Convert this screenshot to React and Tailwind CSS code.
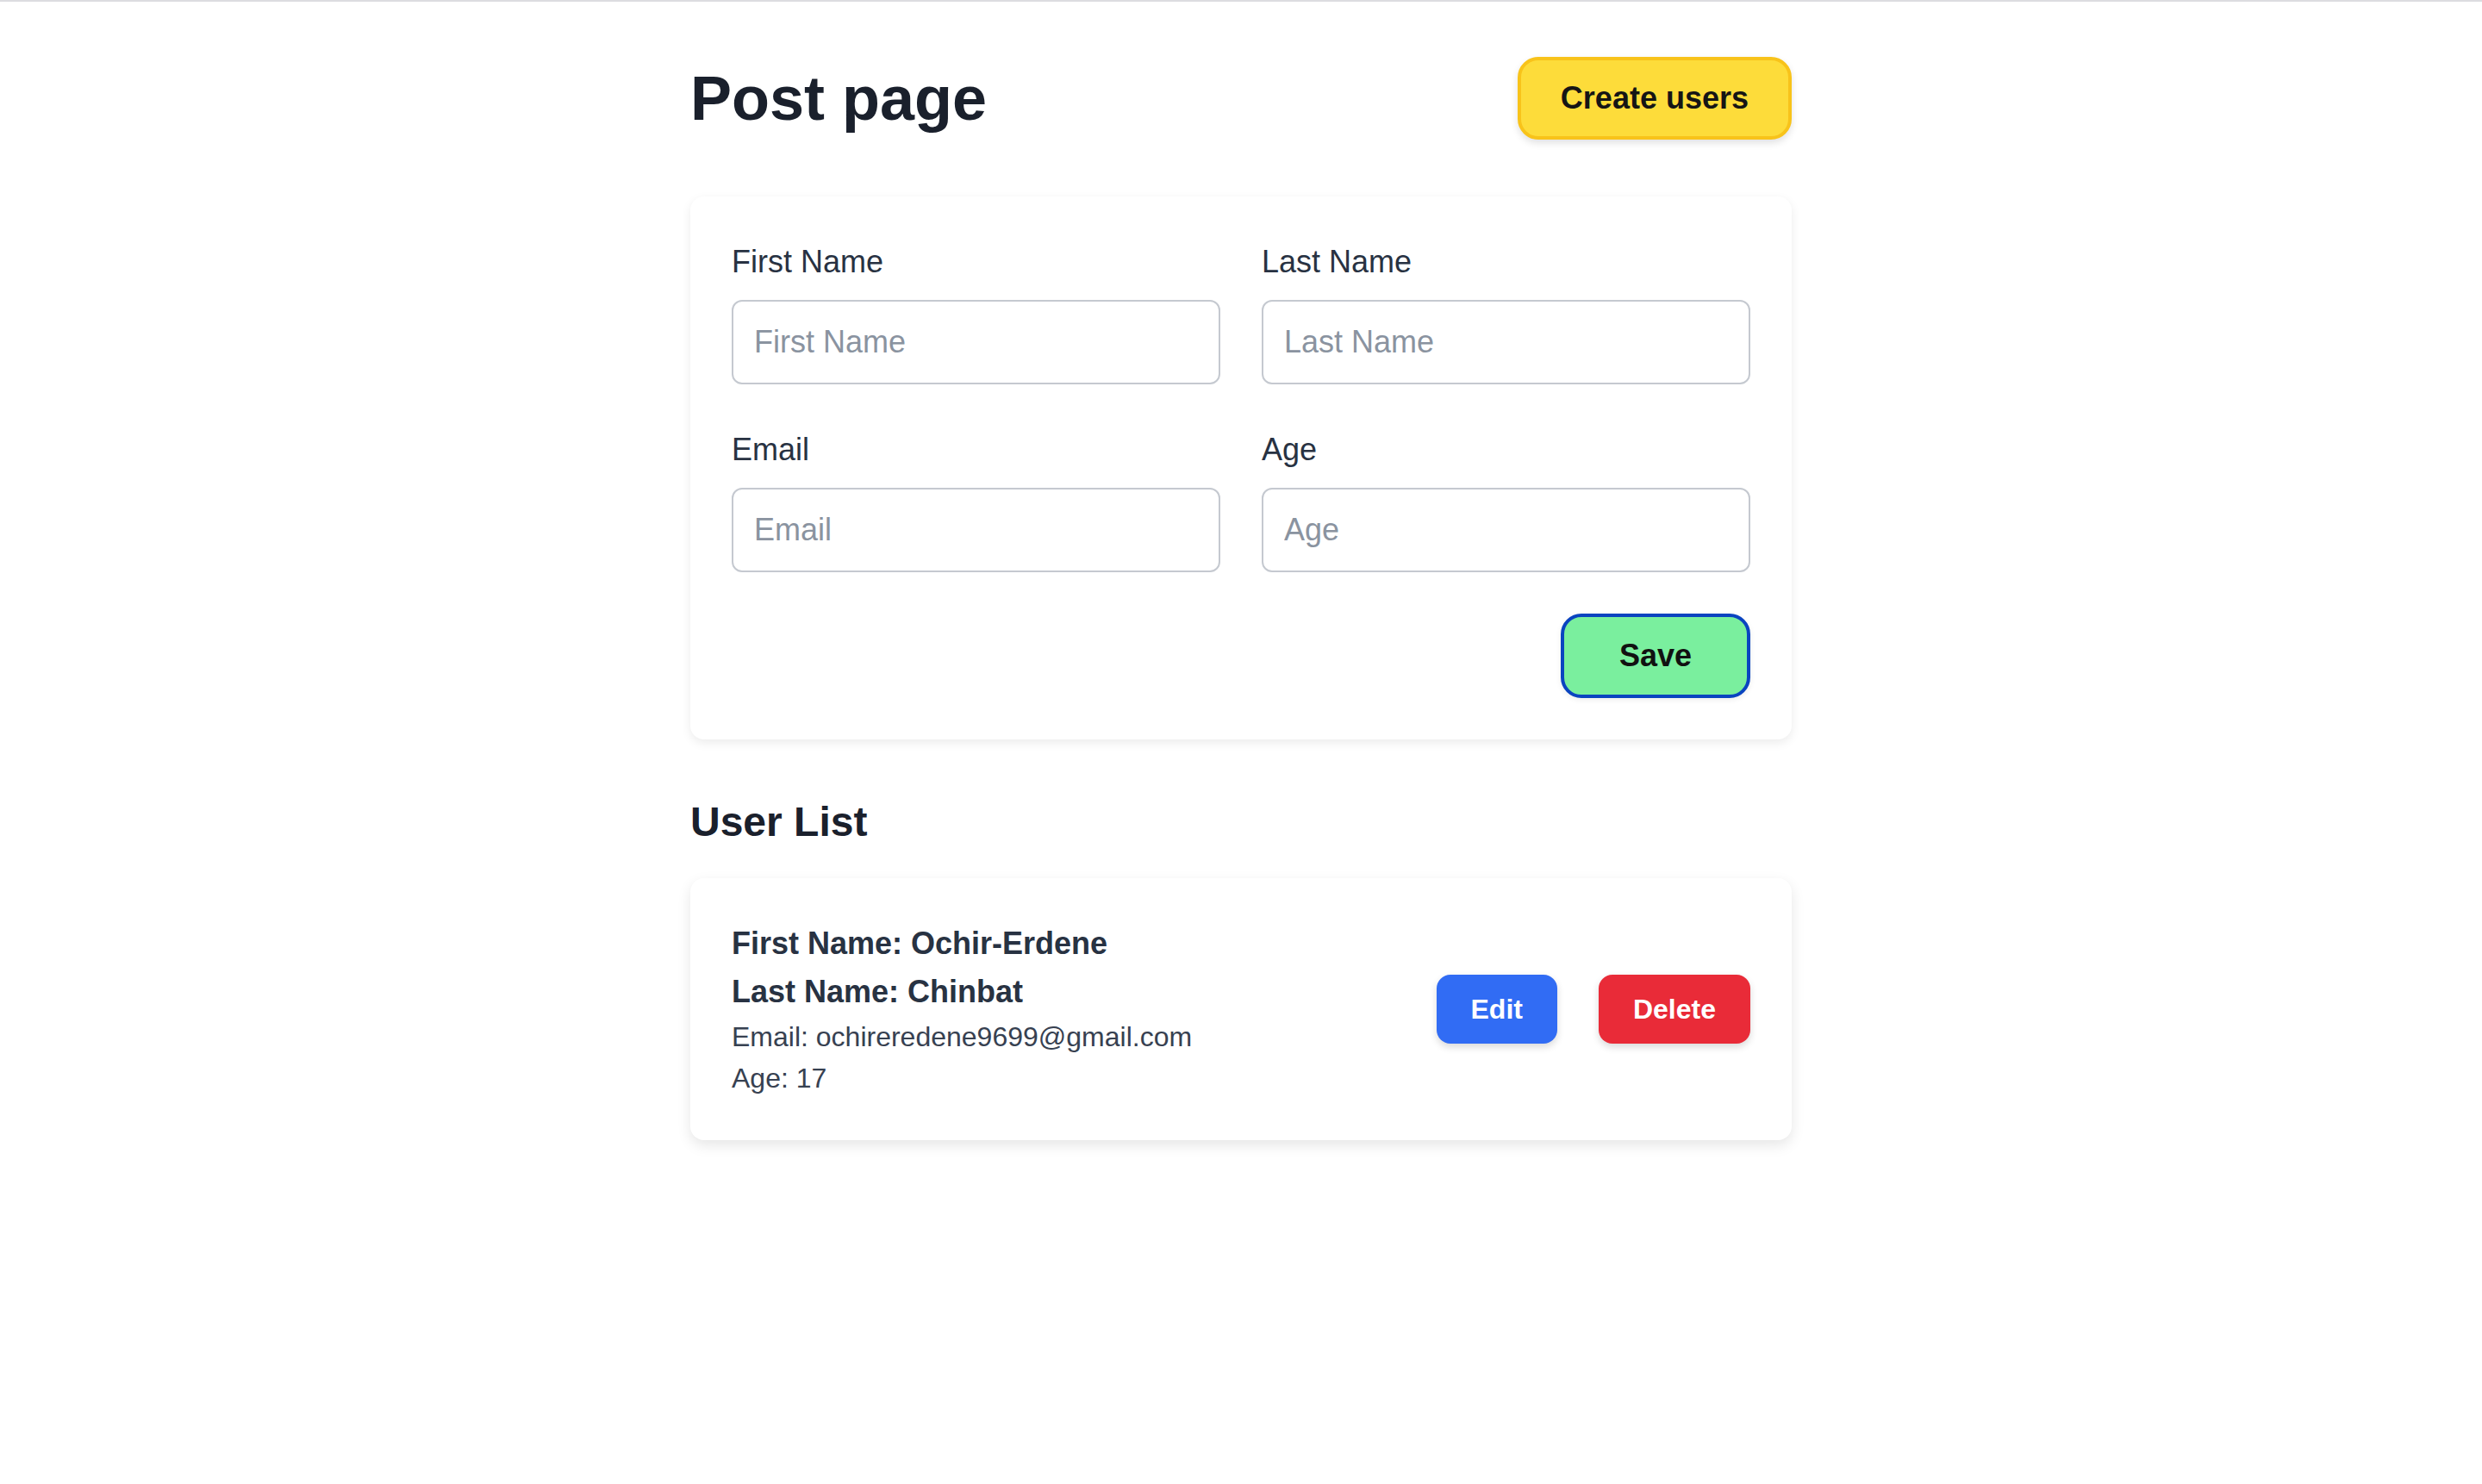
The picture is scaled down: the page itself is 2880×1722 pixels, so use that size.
import React from 'react';

const users = [
  { id: 1, firstName: 'Ochir-Erdene', lastName: 'Chinbat', email: 'ochireredene9699@gmail.com', age: 17 },
];

const fields = [
  { name: 'firstName', label: 'First Name' },
  { name: 'lastName', label: 'Last Name' },
  { name: 'email', label: 'Email' },
  { name: 'age', label: 'Age' },
];

const App = () => {
  return (
    <div className="min-h-screen bg-white border-t-2 border-[#dcdce0] font-['Liberation_Sans',Arial,sans-serif]">
      <div className="max-w-[1278px] mx-auto pt-[64px] pb-20">
        {/* Header */}
        <div className="flex items-center justify-between">
          <h1 className="text-[72px] leading-[80px] font-bold text-[#1a202c]">Post page</h1>
          <button className="px-[46px] py-4 text-[36px] leading-[56px] font-bold text-[#151515] bg-[#fddc3a] border-4 border-[#f8c31a] rounded-3xl shadow-[0_4px_8px_rgba(0,0,0,0.12)]">
            Create users
          </button>
        </div>

        {/* Form */}
        <div className="mt-[66px] p-12 bg-white rounded-2xl shadow-[0_4px_12px_rgba(0,0,0,0.08)]">
          <div className="grid grid-cols-2 gap-12">
            {fields.map(field => (
              <div key={field.name}>
                <label className="block mb-4 text-[36px] leading-[56px] text-[#283242]">{field.label}</label>
                <input
                  type="text"
                  placeholder={field.label}
                  className="w-full h-[98px] px-6 text-[36px] text-[#283242] placeholder:text-[#8a93a0] border-2 border-[#c5c9d0] rounded-xl outline-none"
                />
              </div>
            ))}
          </div>
          <div className="flex justify-end mt-12">
            <button className="px-16 py-[17px] text-[36px] leading-[56px] font-bold text-[#111111] bg-[#7aef9e] border-4 border-[#0a44c0] rounded-3xl shadow-[0_2px_6px_rgba(0,0,0,0.08)]">
              Save
            </button>
          </div>
        </div>

        {/* List */}
        <h2 className="mt-[64px] mb-[33px] text-[48px] leading-[64px] font-bold text-[#1a202c]">User List</h2>
        <div className="space-y-8">
          {users.map(user => (
            <div
              key={user.id}
              className="flex items-center justify-between p-12 bg-white rounded-2xl shadow-[0_6px_16px_rgba(0,0,0,0.10)]"
            >
              <div className="text-[#283242]">
                <p className="text-[36px] leading-[56px] font-bold">First Name: {user.firstName}</p>
                <p className="text-[36px] leading-[56px] font-bold">Last Name: {user.lastName}</p>
                <p className="text-[32px] leading-[48px] text-[#374151]">Email: {user.email}</p>
                <p className="text-[32px] leading-[48px] text-[#374151]">Age: {user.age}</p>
              </div>
              <div className="flex items-center gap-12">
                <button className="px-10 py-4 text-[32px] leading-[48px] font-bold text-white bg-[#316cf4] rounded-2xl shadow-[0_4px_8px_rgba(0,0,0,0.15)]">
                  Edit
                </button>
                <button className="px-10 py-4 text-[32px] leading-[48px] font-bold text-white bg-[#e92b38] rounded-2xl shadow-[0_4px_8px_rgba(0,0,0,0.15)]">
                  Delete
                </button>
              </div>
            </div>
          ))}
        </div>
      </div>
    </div>
  );
};

export default App;
